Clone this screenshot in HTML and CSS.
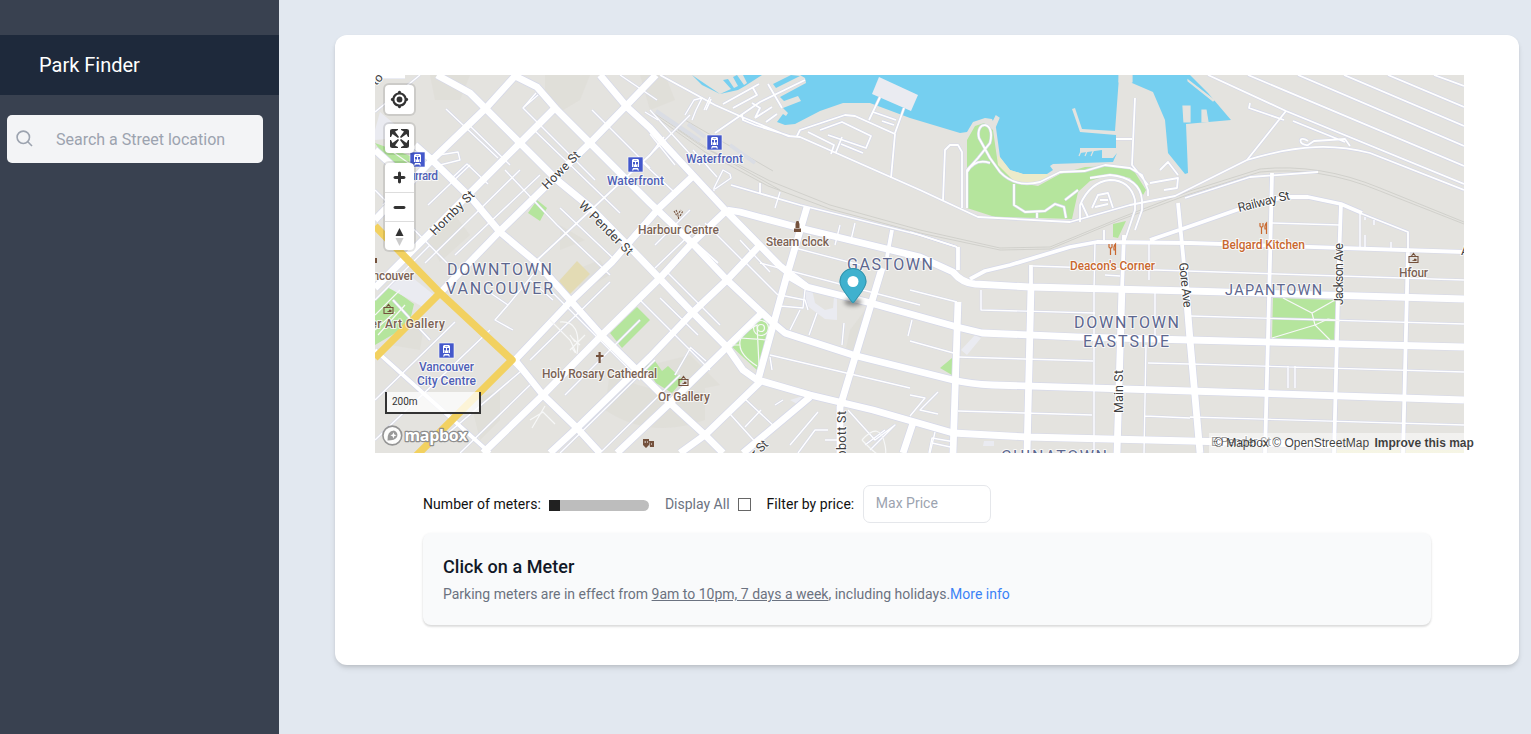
FILE: index.html
```html
<!DOCTYPE html>
<html lang="en">
<head>
<meta charset="utf-8">
<title>Park Finder</title>
<link rel="stylesheet" href="styles.css">
</head>
<body>
<div class="app">
  <aside class="sidebar">
    <h1 class="brand">Park Finder</h1>
    <div class="search">
      <svg class="search-icon" viewBox="0 0 18 18"><circle cx="7.3" cy="7.3" r="6.2"/><path d="M11.8 11.8L16 16"/></svg>
      <input class="search-input" type="text" placeholder="Search a Street location">
    </div>
  </aside>
  <main class="main">
    <section class="card">
      <div class="map">
        <svg class="map-canvas" viewBox="375 75 1089 378">
          <defs>
            <g id="alleys">
              <path d="M375 112L420 75M383 205L408 180L410 190M375 190L447 263M428 205L470 165M446 109L498 158M536 93L523 108L595 180M523 108L538 95M592 110L650 168M470 126L510 165M534 130L620 213M505 170L557 225L610 275M452 178L467 164L488 184M425 263L520 170M455 255L540 175M560 208L615 260M375 300L430 245M375 400L455 322M375 440L490 330M470 262L415 315M486 290L508 305L495 320L513 330M508 305L535 272M530 360L610 282M500 350L575 428M545 285L640 380M440 440L520 372M560 453L655 360M600 453L680 375M460 453L530 385M530 280L553 300M565 395L640 320M650 110L700 165M620 240L680 303M640 300L710 370M660 298L698 335M690 347L706 361M640 160L673 191M655 245L690 210M665 270L720 325M705 223L745 263M740 240L770 272M700 225L655 268M746 263L778 295M675 375L691 347M730 414L758 445M745 399L775 427M745 427L761 410M780 295L805 300L808 310"/>
              <path d="M760 263L920 305M770 355L910 388M800 310L790 330M795 248L860 265M840 225L835 245M855 223L851 240M775 208L780 192M805 290L803 308L780 306M844 323L842 345M817 313L809 335M770 357L772 370M910 290L957 302M910 341L957 354M912 320L908 336M783 400L775 405M818 412L790 445M828 430L815 430L798 453M848 410L875 440L895 425L870 450M865 445L885 430M825 440H840M910 395L925 398L910 416M938 392L920 410L938 414M935 432L930 453M932 443L955 448"/>
              <path d="M981 290V310L1095 313M958 357L1093 361M958 411L1092 415M1095 242L1094 290V453M1149 242V280M1155 290V340M1146 345L1144 453M1148 363L1190 364M1145 416L1190 418M1033 266L1464 280M1190 316L1464 324M1190 364L1464 372M1190 417L1464 425M1272 223L1340 225M1360 214V248M1365 217V220M1374 220V225M1365 235V247M1391 242V249M1288 366V388M1295 366V388M957 247L910 232M1105 275L1120 276M929 453L932 438L955 442"/>
              <path d="M420 158L458 152L460 160L440 165M645 112L658 120M657 100L620 75M650 155L690 115M685 115L694 100L702 98L696 110L692 120M693 150L717 177M650 134L675 165M715 189L731 178L730 174L723 170L714 188V191M704 110L710 97"/>
            </g>
            <g id="lanes">
              <path d="M535 262L650 155L664 137M660 75L715 105L742 117L788 136L800 137L920 190L978 217L1070 222L1130 205L1175 196L1247 160C1300 144 1335 144 1370 153L1464 190M1208 75L1286 111L1464 184M1248 75L1464 166M1298 75L1464 146M1344 75L1464 126M1388 75L1464 107M1434 75L1464 86M731 185L800 205L920 235L957 247M760 193V183M723 104L759 84M733 108L757 95L753 88M706 110L711 99M715 133L760 102L805 80M742 115L743 120L755 125L790 136M755 118L772 107M766 122L777 114M752 103L760 108L755 118M768 84L782 108M797 136L800 130L845 115L855 116L895 134L891 178M869 120L880 97M895 133L904 108M808 132L834 145L831 154M820 130L842 122L871 136L866 148L828 135M842 137L836 152M841 144L863 153M873 112L896 120M882 121L894 125"/>
              <path d="M943 200L945 150L950 145H958L962 152V208M967 208V170L978 158L990 143C996 120 975 120 979 138L990 158L1000 172Q1015 188 1040 182L1060 172L1085 171L1105 165L1130 168L1142 175L1148 190V196M967 172Q975 158 990 163M1014 184V205L1025 212L1045 211L1055 204L1064 207L1066 218M1080 222V205Q1090 182 1110 180Q1130 180 1135 200V210L1125 240M1078 190L1065 200M1090 178L1110 175Q1140 178 1142 200V210L1135 230M1092 208L1098 195L1108 193L1113 208M1095 207L1108 204M1088 217L1081 202M1037 212V218M1100 200H1108M1116 139H1132M1135 98L1132 165L1148 185M1150 183L1178 178L1177 188L1164 190M1160 170L1168 162L1178 175M1104 230V240"/>
              <path d="M1247 160L1286 111M1250 103L1249 108L1284 120M1293 121L1345 142M1185 198L1250 177L1318 172M1308 141C1298 134 1298 146 1308 145L1314 141L1345 139L1350 146M1360 213L1408 232V250M393 300L430 340M640 193L718 263"/>
            </g>
            <g id="streets-s">
              <path d="M1272 173L1270 260L1265 453M1341 203L1339 260L1334 453M1408 250L1403 453M958 247V270M1031 265V287M970 279L985 271L1010 265L1070 247L1097 242L1190 243L1464 252M1150 240L1185 228L1245 207L1285 197H1308L1341 204L1362 213M1178 203L1184 265M1124 235L1122 290M375 350L490 453M892 230L887 257"/>
            </g>
            <g id="streets-m">
              <path d="M375 220L432 160L487 107L515 76M375 288L400 263L440 223L473 190L520 143L555 108M440 293L498 233L590 143L627 105L656 75M515 360L570 302L612 262L660 207L692 177M483 453L543 395L602 335L660 278L692 243L727 210M550 453L577 428L650 357L692 313L727 280L760 245M617 453L670 403L727 347L762 313M680 453L705 435L760 382M743 453L810 397"/>
              <path d="M375 150L395 168M415 145L432 160L473 200L500 232L537 263L603 337L650 383L670 403L705 435L723 453M515 360L543 395L577 428L600 453M437 75L470 93L487 110L520 143L557 180L590 207L640 258L692 312L727 347L743 370L760 382M513 75L537 87L557 110L590 143L650 203L692 243L727 280L773 323M600 75L627 107L650 128L665 145L727 212L780 266L807 287M375 75L405 75"/>
              <path d="M807 207L787 275L758 380M882 268L840 407V453M913 423L903 453M1184 265L1190 340L1200 453M1122 287L1117 453M1031 287L1027 453M958 302L953 453"/>
              <path d="M727 210L740 212L800 228L920 257L953 272Q962 283 975 284L1030 287L1190 291L1464 299M790 277L807 287L867 302L957 327L982 333L1077 337L1190 340L1464 347M773 323L785 333L853 355L953 380Q970 384 993 385L1190 391L1464 400M758 380L810 395L873 410L953 433L1027 437L1190 441L1336 445"/>
            </g>
          </defs>
          <rect class="land" x="375" y="75" width="1089" height="378"/>
          <g class="shade">
            <path d="M545 75H590L580 100L555 115L545 100ZM430 75H470L460 100H435ZM425 235L455 215L470 235L440 262ZM610 370Q650 400 705 385V420Q650 440 605 410ZM470 400L500 390V420L480 440ZM575 270L600 260L610 275L580 292ZM650 365L690 355L720 385L670 395ZM390 320H425L420 350L390 345ZM640 75H665L675 100L650 110ZM850 330L865 310L860 350L845 353ZM560 225L585 240L560 250Z"/>
          </g>
          <g class="water">
            <path d="M692 75L702 85L720 94L731 89L723 80L728 79L734 88L738 86L733 77L737 75L744 85L747 83L743 75H762L745 86L738 90L720 94ZM773 84L776 88L800 76L791 75Z"/>
            <path d="M800 75L805 78L806 83L780 97L784 101L798 96L801 101L783 108L788 113L786 116L783 114L777 122L785 125L795 124L820 111L843 103L870 103L910 118L960 133L967 132L973 122L985 118L992 119L996 128L1000 157L1010 170L1023 174H1047L1053 170L1050 166L1053 164L1113 162L1117 153L1113 158H1102V150L1080 153V148H1116V135L1080 132L1072 109L1075 108L1082 129L1115 131L1119 77H1130L1132 83L1153 92L1165 120L1168 153L1185 174L1188 173L1186 124L1231 120L1208 93L1190 75Z"/>
          </g>
          <path class="pier" d="M1183 106H1190V122H1184ZM1202 110H1206L1208 122H1202ZM990 128L996 116L999 118L994 130ZM1082 149L1079 156M1088 149L1085 156M1094 149L1091 156M1119 75H1132V82H1119ZM1188 80L1214 100L1213 101L1188 81Z"/>
          <path class="wharf" d="M879 77L918 95L911 111L872 94Z"/>
          <path class="sand" d="M998 155L1010 170L1023 174H1047L1053 178L1030 185L1015 181L997 168ZM1336 450H1464V453H1336Z"/>
          <g class="park">
            <path d="M967 140L975 126L984 123L993 130L998 165L1015 182L1038 186L1060 174L1085 167L1115 166L1132 168L1146 190L1143 195L1130 178L1112 174L1090 181L1078 192L1072 219L1040 218L995 217L967 208Z"/>
            <path d="M1113 224L1126 221L1118 238L1113 237ZM1273 298L1336 300L1334 341L1272 339ZM760 315L770 323L757 370L731 346ZM610 333L637 307L650 320L622 348ZM537 200L547 208L540 221L528 213ZM645 366L655 361L662 371L668 366L683 380L672 393L656 383ZM940 368L952 358V375ZM375 143L400 152L420 160L410 170L390 165ZM375 300L389 286L414 304L409 325L375 345Z"/>
          </g>
          <path class="sandlot" d="M559 281L577 261L590 274L570 294Z"/>
          <g class="wharf">
            <path d="M375 130L380 112L398 127V138L375 140ZM387 287L403 270L434 295L423 307ZM790 400L803 396L797 404ZM961 350L975 335L981 338L967 355ZM805 292L812 289L815 303L825 310L833 308L834 297L837 298V320L825 319L806 305ZM984 441H994V446H983Z"/>
          </g>
          <g class="rail">
            <path d="M652 112L710 150L770 181L830 205L920 230L1000 248L1050 247L1120 218L1190 191L1260 169Q1320 163 1380 188L1464 222M655 116L705 152L768 186L830 209L920 233L1000 250L1050 249L1120 220L1190 194L1260 172Q1320 166 1380 191L1464 224M685 120L773 171M678 130L700 145L780 190"/>
            <path class="ties" d="M656 111L700 141M688 124L705 137M730 145L755 163"/>
          </g>
          <use class="casing alley" href="#alleys"/><use class="casing lane" href="#lanes"/><use class="casing small" href="#streets-s"/><use class="casing major" href="#streets-m"/>
          <use class="road alley" href="#alleys"/><use class="road lane" href="#lanes"/><use class="road small" href="#streets-s"/><use class="road major" href="#streets-m"/>
          <g class="paths">
            <path d="M1283 298L1312 313L1335 300M1312 313L1315 325L1330 340M1272 338L1315 325L1328 319L1340 321M732 345H740Q738 335 757 325L759 365M740 345Q740 355 757 366M740 338L768 340M375 330L395 312M375 315L400 290M378 335L405 305M390 150L410 164"/>
            <circle cx="761" cy="328" r="7.5"/><circle cx="761" cy="328" r="3.5"/>
            <path d="M550 320L570 340Q580 360 572 348M560 322Q582 320 577 354M570 335L575 342M585 335L570 350M580 345L572 338M530 420L543 412L555 424M532 428L545 406M862 440Q880 420 885 445T862 440"/>
          </g>
          <path class="highway" d="M375 226L440 293L512 360L415 457M440 293L375 358"/>
          <g class="labels place">
            <text x="447" y="275" textLength="105">DOWNTOWN</text><text x="446" y="294" textLength="107">VANCOUVER</text>
            <text x="847" y="270" textLength="86">GASTOWN</text>
            <text x="1074" y="328" textLength="105">DOWNTOWN</text><text x="1083" y="347" textLength="86">EASTSIDE</text>
            <text x="1225" y="295" textLength="97" class="sm">JAPANTOWN</text><text x="1001" y="462" textLength="106">CHINATOWN</text>
          </g>
          <g class="labels street">
            <text transform="translate(435 236) rotate(-45)" textLength="57">Hornby St</text>
            <text transform="translate(547 190) rotate(-45)" textLength="48">Howe St</text>
            <text transform="translate(578 206) rotate(45)" textLength="71">W Pender St</text>
            <text transform="translate(1239 212) rotate(-14)" textLength="53">Railway St</text>
            <text transform="translate(1123 413) rotate(-90)" textLength="43">Main St</text>
            <text transform="translate(846 466) rotate(-90)" textLength="55">Abbott St</text>
            <text transform="translate(1179 263) rotate(84)" textLength="45">Gore Ave</text>
            <text transform="translate(1343 305) rotate(-90)" textLength="62">Jackson Ave</text>
            <text transform="translate(735 479) rotate(-45)" textLength="48">Keefer St</text>
            <text transform="translate(376 86) rotate(-45)">to</text><text x="1461" y="255">A</text><text transform="translate(575 68) rotate(45)">er</text>
            <text x="1211" y="446" textLength="60">E Pender St</text>
          </g>
          <g class="labels transit">
            <text x="607" y="185" textLength="57">Waterfront</text><text x="686" y="163" textLength="57">Waterfront</text>
            <text x="402" y="180" textLength="36">Burrard</text><text x="419" y="371" textLength="55">Vancouver</text><text x="417" y="385" textLength="59">City Centre</text>
          </g>
          <g class="labels poi">
            <text x="638" y="234" textLength="81">Harbour Centre</text><text x="766" y="246" textLength="63">Steam clock</text>
            <text x="542" y="378" textLength="115">Holy Rosary Cathedral</text><text x="658" y="401" textLength="52">Or Gallery</text>
            <text x="359" y="280" textLength="55">Vancouver</text><text x="322" y="328" textLength="123">Vancouver Art Gallery</text><text x="1399" y="277" textLength="29">Hfour</text>
          </g>
          <g class="labels food"><text x="1070" y="270" textLength="85">Deacon's Corner</text><text x="1222" y="249" textLength="83">Belgard Kitchen</text></g>
          <defs>
            <g id="train"><rect class="train-box" width="15" height="15"/><path class="train-body" fill-rule="evenodd" d="M5 2H10L11 3V10H4V3ZM6 3V3.6H9V3ZM5 5V7.6H7V5ZM8 5V7.6H10V5ZM5 8.6V9.4H6V8.6ZM9 8.6V9.4H10V8.6ZM5 11L4 13.5H5.3L5.7 12.6H9.3L9.7 13.5H11L10 11Z"/></g>
            <g id="gallery"><path class="icon-line" d="M1 4.5H10V10.5H1ZM3.5 4L5.5 1.5L7.5 4"/><path class="icon-fill" d="M4.5 9V8L5.5 8.3L6.5 6.5L8.5 7V9Z"/></g>
            <g id="fork"><path class="fork-line" d="M1 0V3Q1 4 2.5 4V11M4 0V3Q4 4 2.6 4M7.5 11V0Q5.5 2 6 6H7.5"/></g>
          </defs>
          <use href="#train" x="410" y="152"/><use href="#train" x="628" y="157"/><use href="#train" x="707" y="135"/><use href="#train" x="439" y="343"/>
          <use href="#gallery" x="383" y="303"/><use href="#gallery" x="678" y="375"/><use href="#gallery" x="1408" y="252"/>
          <use href="#fork" x="1108" y="244"/><use href="#fork" x="1259" y="223"/>
          <path class="icon-fill" d="M598.5 352H600.7V355H603.5V357H600.7V363H598.5V357H596V355H598.5ZM796.5 221H798.5L799.5 224V228H795.5V224ZM794 228.5H801V232H794ZM643 439H649V445L646 448L643 445ZM649 441H654V447H650ZM375 258H377V263H375Z"/>
          <path class="icon-line tower" d="M674 211L677 216H680L683 211M676 210L678 214L681 210M678.5 217V220"/>
          <path class="mask-eyes" d="M644.5 442H646M647 442H648M651 444H652"/>
          <ellipse class="pin-shadow" cx="853" cy="302" rx="9" ry="4"/>
          <g transform="translate(839.5 268)">
            <path class="pin" d="M27 13.5C27 19.07 20.25 27 14.75 34.5C14.02 35.5 12.98 35.5 12.25 34.5C6.75 27 0 19.22 0 13.5C0 6.04 6.04 0 13.5 0C20.96 0 27 6.04 27 13.5Z"/>
            <path class="pin-edge" d="M26.5 13.5C26.5 19 20 26.5 14.5 34Q13.5 35 12.5 34C7 26.5 .5 19 .5 13.5A13 13 0 0 1 26.5 13.5Z"/>
            <circle class="pin-hole" cx="13.5" cy="13.5" r="5.5"/>
          </g>
          <g class="logo"><circle class="logo-ring" cx="392.3" cy="435.5" r="9.4"/><path class="logo-dot" d="M387.5 440.5Q387 431 394 430.5A4.7 4.7 0 0 1 397 437Q395 440.5 387.5 440.5Z"/><path class="logo-star" d="M393.4 432.2L394.3 434.4L396.5 435.3L394.3 436.2L393.4 438.4L392.5 436.2L390.3 435.3L392.5 434.4Z"/><text x="404.5" y="441" textLength="63">mapbox</text></g>
        </svg>
        <div class="controls">
          <div class="control-group"><button class="control"><svg viewBox="0 0 20 20"><path d="M10 4C9 4 9 5 9 5v.1A5 5 0 0 0 5.1 9H5s-1 0-1 1 1 1 1 1h.1A5 5 0 0 0 9 14.9v.1s0 1 1 1 1-1 1-1v-.1a5 5 0 0 0 3.9-3.9h.1s1 0 1-1-1-1-1-1h-.1A5 5 0 0 0 11 5.1V5s0-1-1-1zm0 2.5a3.5 3.5 0 1 1 0 7 3.5 3.5 0 1 1 0-7z"/><circle cx="10" cy="10" r="2"/></svg></button></div>
          <div class="control-group"><button class="control"><svg viewBox="0 0 29 29"><path d="M24 16v5.5c0 1.75-.75 2.5-2.5 2.5H16v-1l3-1.5-4-5.5 1-1 5.5 4 1.5-3h1zM6 16l1.5 3 5.5-4 1 1-4 5.5 3 1.5v1H7.5C5.75 24 5 23.25 5 21.5V16h1zm7-11v1l-3 1.5 4 5.5-1 1-5.5-4L6 13H5V7.5C5 5.75 5.75 5 7.5 5H13zm11 2.5c0-1.75-.75-2.5-2.5-2.5H16v1l3 1.5-4 5.5 1 1 5.5-4 1.5 3h1V7.5z"/></svg></button></div>
          <div class="control-group">
            <button class="control"><svg viewBox="0 0 29 29"><path d="M14.5 8.5c-.75 0-1.5.75-1.5 1.5v3h-3c-.75 0-1.5.75-1.5 1.5S9.25 16 10 16h3v3c0 .75.75 1.5 1.5 1.5S16 19.75 16 19v-3h3c.75 0 1.5-.75 1.5-1.5S19.75 13 19 13h-3v-3c0-.75-.75-1.5-1.5-1.5z"/></svg></button>
            <button class="control"><svg viewBox="0 0 29 29"><path d="M10 13c-.75 0-1.5.75-1.5 1.5S9.25 16 10 16h9c.75 0 1.5-.75 1.5-1.5S19.75 13 19 13h-9z"/></svg></button>
            <button class="control"><svg viewBox="0 0 29 29"><path d="M10.5 14l4-8 4 8h-8z"/><path class="south" d="M10.5 16l4 8 4-8h-8z"/></svg></button>
          </div>
        </div>
        <div class="scale">200m</div>
        <div class="attribution"><span>© Mapbox</span> <span>© OpenStreetMap</span> <b>Improve this map</b></div>
      </div>
      <div class="filters">
        <span class="filter-label">Number of meters:</span>
        <span class="slider"><span class="thumb"></span></span>
        <span class="display-all">Display All</span><span class="checkbox"></span>
        <span class="filter-label">Filter by price:</span>
        <input class="price" type="text" placeholder="Max Price">
      </div>
      <div class="info">
        <h2 class="info-title">Click on a Meter</h2>
        <p class="info-text">Parking meters are in effect from <u>9am to 10pm, 7 days a week</u>, including holidays.<a class="more">More info</a></p>
      </div>
    </section>
  </main>
</div>
</body>
</html>
```

FILE: styles.css
```css
* { box-sizing: border-box; }
body { margin: 0; background: #e2e8f0; font-family: Roboto, sans-serif; color: #111827; }
.app { display: flex; height: 734px; overflow: hidden; }
.sidebar { width: 279px; flex: none; padding-top: 35px; background: #394150; }
.brand { margin: 0; height: 60px; line-height: 60px; padding-left: 39px; background: #1e293b; color: #fff; font-size: 20px; font-weight: 400; }
.search { display: flex; align-items: center; gap: 21px; width: 256px; height: 48px; margin: 20px 0 0 7px; padding-left: 9px; background: #f3f4f6; border-radius: 5px; }
.search-icon { width: 18px; height: 18px; flex: none; fill: none; stroke: #9ca3af; stroke-width: 1.6; }
.search-input { width: 190px; border: 0; padding: 2px 0 0; background: none; margin-left: 1px; font: 16px/24px Roboto, sans-serif; }
.search-input::placeholder, .price::placeholder { color: #9ca3af; opacity: 1; }

.main { flex: 1; padding: 35px 12px 0 56px; }
.card { height: 630px; padding: 40px; background: #fff; border-radius: 12px; box-shadow: 0 4px 6px -1px rgba(0,0,0,.1), 0 2px 4px -1px rgba(0,0,0,.12); }

.map { position: relative; width: 1089px; height: 378px; }
.map-canvas { display: block; width: 1089px; height: 378px; overflow: hidden; }
.land, .pier { fill: #e4e3df; }
.pier { stroke: #e4e3df; stroke-width: 1.2; }
.shade { fill: #dedcd5; opacity: .6; }
.water { fill: #75cff0; }
.wharf { fill: #eaebf1; }
.sand { fill: #ecebca; }
.sandlot { fill: #e3dbb4; }
.park { fill: #b5e59d; }
.rail { fill: none; stroke: #cccbc7; stroke-width: .8; }
.rail .ties { stroke: #dadde4; stroke-width: 4; }
.casing, .road { fill: none; stroke-linejoin: round; }
.casing { stroke: #d5d8e9; }
.road { stroke: #fff; }
.road.alley { stroke-width: 1.4; } .casing.alley { stroke-width: 2.5; }
.road.lane { stroke-width: 1.8; } .casing.lane { stroke-width: 3; }
.road.small { stroke-width: 3.8; } .casing.small { stroke-width: 5.2; }
.road.major { stroke-width: 6.8; } .casing.major { stroke-width: 8.2; }
.paths { fill: none; stroke: #f7f8f8; stroke-width: 1.2; }
.highway { fill: none; stroke: #f2d160; stroke-width: 7.4; stroke-linejoin: round; }

.labels { font-family: Roboto, sans-serif; paint-order: stroke; stroke: rgba(255,255,255,.75); stroke-width: 2px; stroke-linejoin: round; }
.place { fill: #5d678f; font-size: 16px; font-weight: 400; }
.place .sm { font-size: 14.5px; }
.street { fill: #404040; font-size: 12.5px; }
.transit { fill: #4f60b6; font-size: 12px; font-weight: 500; }
.poi { fill: #7b6254; font-size: 12px; font-weight: 500; }
.food { fill: #c9682f; font-size: 12px; font-weight: 500; }
.train-box { fill: #4458cb; stroke: #fff; stroke-width: .6; }
.train-body { fill: #fff; }
.icon-line { fill: none; stroke: #74513c; stroke-width: 1.1; }
.icon-fill { fill: #74513c; }
.tower { stroke-dasharray: 2 1; }
.mask-eyes { stroke: #fff; stroke-width: 1; }
.fork-line { fill: none; stroke: #c9682f; stroke-width: 1.2; }
.pin-shadow { fill: #222; opacity: .45; filter: blur(2px); }
.pin { fill: #3fb1ce; }
.pin-edge { fill: none; stroke: #2c7c90; stroke-opacity: .6; }
.pin-hole { fill: #fff; }
.logo-ring { fill: rgba(255,255,255,.9); stroke: #959595; stroke-width: 1.6; }
.logo-dot { fill: #999; }
.logo-star { fill: #fff; }
.logo text { font: 700 16px "Open Sans", sans-serif; fill: #fff; stroke: #8d8d8d; stroke-width: 2.4px; paint-order: stroke; stroke-linejoin: round; }

.controls { position: absolute; left: 10px; top: 10px; display: flex; flex-direction: column; gap: 10px; }
.control-group { border-radius: 4px; background: #fff; box-shadow: 0 0 0 2px rgba(0,0,0,.1); overflow: hidden; }
.control { display: block; width: 29px; height: 29px; padding: 0; border: 0; background: none; }
.control + .control { border-top: 1px solid #ddd; }
.control svg { display: block; width: 29px; height: 29px; margin-top: -.5px; fill: #333; }
.control .south { fill: #ccc; }
.scale { position: absolute; left: 10px; top: 317px; width: 96px; height: 22px; padding: 0 5px; border: 2px solid #333; border-top: 0; background: rgba(255,255,255,.75); color: #333; font-size: 10px; line-height: 20px; }
.attribution { position: absolute; left: 834px; top: 358px; width: 270px; height: 20px; padding-left: 5px; color: rgba(0,0,0,.75); font: 12px/20px "Liberation Sans", Arial, sans-serif; white-space: nowrap; background: linear-gradient(to right, rgba(255,255,255,.5) 0, rgba(255,255,255,.5) 255px, transparent 255px); }
.attribution b { margin-left: 2px; }

.filters { display: flex; align-items: center; height: 38px; margin: 32px 0 0 48px; font-size: 14px; line-height: 20px; }
.filter-label { color: #111; letter-spacing: .06px; }
.slider { width: 100px; height: 11px; margin: 3px 16px 0 8px; border-radius: 0 6px 6px 0; background: #bdbdbd; }
.thumb { display: block; width: 11px; height: 11px; background: #212121; }
.display-all { color: #6b7280; }
.checkbox { width: 13px; height: 13px; margin: 0 16px 0 8px; border: 1px solid #666; background: #fff; }
.price { width: 128px; height: 38px; margin-left: 8.5px; padding: 0 12px 2px; border: 1px solid #e5e7eb; border-radius: 7px; font: 14px Roboto, sans-serif; }
.info { width: 1008px; height: 92px; margin: 10px 0 0 48px; padding: 20px; border-radius: 8px; background: #f9fafb; box-shadow: 0 1px 3px rgba(0,0,0,.1), 0 2px 2px rgba(0,0,0,.08); }
.info-title { margin: 0; font-size: 18px; line-height: 28px; font-weight: 500; letter-spacing: .06px; }
.info-text { margin: 3px 0 0; color: #6b7280; font-size: 14px; line-height: 20px; }
.more { color: #3b82f6; }
```
